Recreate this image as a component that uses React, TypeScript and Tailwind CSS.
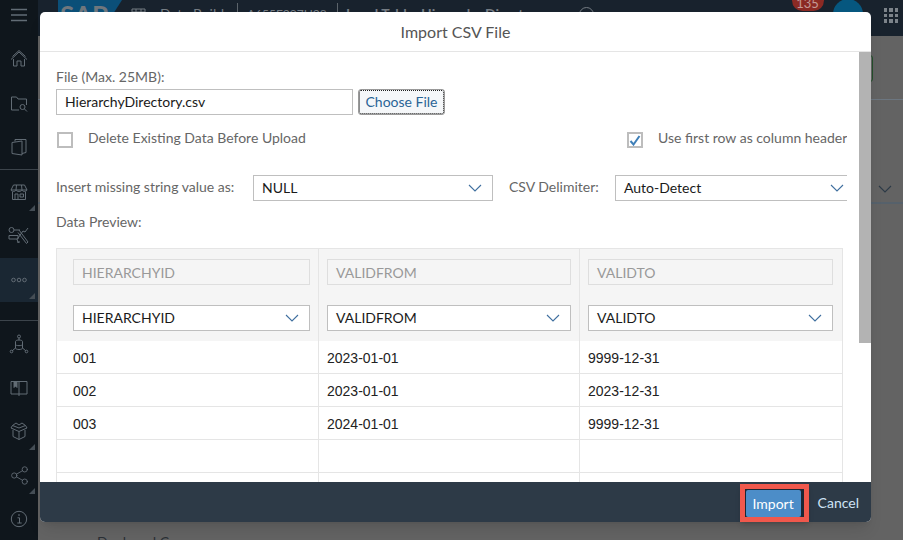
import { Share2 } from "lucide-react";

const rows = [
  ["001", "2023-01-01", "9999-12-31"],
  ["002", "2023-01-01", "2023-12-31"],
  ["003", "2024-01-01", "9999-12-31"],
  ["", "", ""],
  ["", "", ""],
];

const columns = [
  { name: "HIERARCHYID", width: "w-[261px]", pad: "pl-[16px] pr-[8px]" },
  { name: "VALIDFROM", width: "w-[261px]", pad: "pl-[8px] pr-[8px]" },
  { name: "VALIDTO", width: "w-[263px]", pad: "pl-[8px] pr-[9px]" },
];

function Chevron({ className }: { className: string }) {
  return (
    <svg width="14" height="8" viewBox="0 0 14 8" fill="none" stroke="currentColor" strokeWidth="1.1" className={className}>
      <path d="M1 1l6 6 6-6" />
    </svg>
  );
}

function Select({ value, className }: { value: string; className: string }) {
  return (
    <div className={`h-[26px] border border-[#bfbfbf] bg-white flex items-center justify-between pl-2 pr-[10px] text-[14px] text-[#1a1a1a] ${className}`}>
      <span className="-mt-px">{value}</span>
      <Chevron className="text-[#3f6f9f]" />
    </div>
  );
}

function Glyph({ children, w = 20, h = 20 }: { children: React.ReactNode; w?: number; h?: number }) {
  return (
    <svg width={w} height={h} viewBox={`0 0 ${w} ${h}`} fill="none" stroke="currentColor" strokeWidth="1" className="text-[#626c75]">
      {children}
    </svg>
  );
}

function RailItem({ children, active, arrow, className }: { children: React.ReactNode; active?: boolean; arrow?: boolean; className: string }) {
  return (
    <div className={`relative w-full flex items-center justify-center shrink-0 ${active ? "bg-[#1a2733]" : ""} ${className}`}>
      {children}
      {arrow && <div className="absolute right-[3px] bottom-[3px] w-0 h-0 border-l-[6px] border-l-transparent border-b-[6px] border-b-[#454e56]" />}
    </div>
  );
}

function Rail() {
  return (
    <aside className="w-[38px] h-full bg-[#0f161c] flex flex-col shrink-0 overflow-hidden">
      <RailItem className="h-[30px]">
        <Glyph w={16} h={14}>
          <path d="M0 1.5h16M0 7h16M0 12.5h16" strokeWidth="1.6" />
        </Glyph>
      </RailItem>
      <RailItem className="h-[58px]">
        <Glyph>
          <path d="M2 10.5L10 3l8 7.5M3.5 7.5L10 1.5l6.500 6M4.500 10v7H8v-5h4v5h3.500v-7" />
        </Glyph>
      </RailItem>
      <RailItem className="h-[30px]">
        <Glyph>
          <path d="M2.500 17V4h5l1.500 2h8.500v6M2.500 17H10" />
          <circle cx="13.500" cy="14" r="2.500" />
          <path d="M15.500 16l2.500 2.500" />
        </Glyph>
      </RailItem>
      <RailItem className="h-[51px] pt-[7px]">
        <Glyph>
          <path d="M3 5.500L13 4v14L3 16.500zM6 4.500V2.500h11v13l-4 1" />
        </Glyph>
      </RailItem>
      <div className="h-px bg-[#3c444b] shrink-0" />
      <RailItem arrow className="h-[44px]">
        <Glyph>
          <path d="M4.500 3h11L18 8H2zM2 8c1 2 4 2 5 0 1 2 5 2 6 0 1 2 4 2 5 0M7.500 3L7 8M12.500 3l.5 5M3.500 10v7.500h13V10" />
          <path d="M6 12h3v5.500H6zM11 12h3.500v3H11z" />
        </Glyph>
      </RailItem>
      <RailItem className="h-[44px]">
        <Glyph w={22} h={18}>
          <circle cx="3.500" cy="3" r="2.500" />
          <path d="M6 3h6M1 8.500h9v3.500H1zM11 3l9 12-1.500 1.500-8.500-11M20 1l-3 4-2-1-6 8.500 1.500 3.500" />
          <path d="M12 15h-3" />
        </Glyph>
      </RailItem>
      <RailItem active arrow className="h-[44px]">
        <Glyph w={16} h={6}>
          <circle cx="2.500" cy="3" r="1.800" />
          <circle cx="8" cy="3" r="1.800" />
          <circle cx="13.500" cy="3" r="1.800" />
        </Glyph>
      </RailItem>
      <div className="h-[18px] shrink-0" />
      <div className="h-px bg-[#3c444b] shrink-0" />
      <RailItem className="h-[46px]">
        <Glyph>
          <circle cx="10" cy="2.500" r="1.500" />
          <path d="M10 4v2M6.500 7.500c0-2 7-2 7 0v6.500c0 2-7 2-7 0zM6.500 10.500c0 1.500 7 1.500 7 0M6.500 14L3 17M13.500 14l3.500 3" />
          <circle cx="2.500" cy="17.500" r="1.300" />
          <circle cx="17.500" cy="17.500" r="1.300" />
        </Glyph>
      </RailItem>
      <RailItem className="h-[42px]">
        <Glyph w={18} h={18}>
          <path d="M1 2.500h16v12.500H1zM9 2.500V17" />
          <path d="M4 2.500v6l1.500-1.500L7 8.500v-6" fill="currentColor" />
        </Glyph>
      </RailItem>
      <RailItem arrow className="h-[44px]">
        <Glyph>
          <path d="M10 7L3.500 4.500 7 2l3 2 3-2 3.500 2.500zM10 10.500L2 7l1.500-2.500M10 10.500L18 7l-1.500-2.500M4 9v6.500l6 3 6-3V9M10 10.500v8" />
        </Glyph>
      </RailItem>
      <RailItem arrow className="h-[44px]">
        <Share2 className="w-[21px] h-[21px] text-[#626c75]" strokeWidth={1} />
      </RailItem>
      <RailItem className="h-[44px]">
        <Glyph w={18} h={18}>
          <circle cx="9" cy="9" r="7.700" />
          <path d="M7.500 7.800H9.500V13M7.300 13h4.400" />
          <path d="M8.300 5h1.400" strokeWidth="1.400" />
        </Glyph>
      </RailItem>
    </aside>
  );
}

function ShellHeader() {
  return (
    <header className="h-[36px] bg-[#18222d] shrink-0 flex items-start text-[14px] text-[#757c83] overflow-hidden">
      <div className="ml-[20px] w-[64px] h-[36px] bg-[#0b4f78] [clip-path:polygon(0_0,100%_0,64%_100%,0_100%)] pl-[2px] text-[26px] leading-[30px] font-bold text-[#70777d]">SAP</div>
      <svg width="15" height="14" viewBox="0 0 15 14" fill="none" stroke="currentColor" className="ml-[9px] mt-[8px]">
        <path d="M1 1h13v12H1zM1 4h13M5 1v12M10 1v12" />
      </svg>
      <span className="ml-[14px] mt-[4px] w-[77px] shrink-0 leading-[20px] whitespace-nowrap">Data Builder</span>
      <div className="mt-[3px] w-px h-[30px] bg-[#5c646b]" />
      <span className="ml-[9px] mt-[4px] w-[90px] shrink-0 text-[12px] leading-[20px] whitespace-nowrap">A655F097H08</span>
      <div className="mt-[3px] w-px h-[30px] bg-[#5c646b]" />
      <span className="ml-[8px] mt-[4px] w-[233px] shrink-0 leading-[20px] font-bold whitespace-nowrap">Local Table: Hierarchy Directory</span>
      <div className="mt-[7px] w-[15px] h-[15px] rounded-full border border-[#757c83] shrink-0" />
      <div className="ml-auto -mt-[10px] w-[32px] h-[21px] rounded-full bg-[#8b2a24] text-[#c49a95] text-[13px] leading-[26px] text-center shrink-0">135</div>
      <div className="ml-[9px] w-[30px] h-[34px] -mt-[1px] rounded-full bg-[#06577f] shrink-0" />
      <div className="ml-[21px] mr-[5px] mt-[8px] grid grid-cols-3 gap-[2px] shrink-0">
        {Array.from({ length: 9 }).map((_, i) => (
          <div key={i} className="w-[3.500px] h-[3.500px] bg-[#7c838a]" />
        ))}
      </div>
    </header>
  );
}

function BackgroundPage() {
  return (
    <div className="flex-1 min-h-0 flex flex-col bg-[#636363] text-[#2a2f35]">
      <div className="h-[64px] border-b border-[#6c7680] shrink-0 flex justify-end pr-[30px] pt-[19px]">
        <div className="w-[60px] h-[27px] rounded-[3px] border border-[#24502c]" />
      </div>
      <div className="h-[104px] border-b-2 border-[#56616b] shrink-0 flex justify-end items-end pr-[11px] pb-[9px]">
        <Chevron className="text-[#2c3a47]" />
      </div>
      <div className="pl-[59px] pt-[328px] text-[14px] leading-[20px] whitespace-nowrap">Deployed C</div>
    </div>
  );
}

export default function App() {
  return (
    <div className="w-[903px] h-[540px] overflow-hidden flex bg-[#616161] font-['Lato',sans-serif]">
      <Rail />

      <div className="flex-1 flex flex-col min-w-0 relative">
        <ShellHeader />
        <BackgroundPage />

        {/* Dialog */}
        <div className="absolute left-[2px] top-[12px] w-[831px] h-[510px] rounded-[5px] bg-white flex flex-col shadow-lg">
          <div className="h-[40px] shrink-0 border-b border-[#e5e5e5] flex items-center justify-center text-[16px] text-[#555]">Import CSV File</div>

          <div className="flex-1 min-h-0 flex overflow-hidden">
            <div className="w-[807px] shrink-0 pl-[16px] pt-[16px]">
              <div className="w-[791px] overflow-hidden">
                <div className="text-[14px] leading-[18px] text-[#666]">File (Max. 25MB):</div>
                <div className="flex items-center mt-[3px]">
                  <div className="w-[297px] h-[26px] border border-[#bfbfbf] flex items-center pl-2 pb-px text-[14px] text-[#1a1a1a]">HierarchyDirectory.csv</div>
                  <button className="ml-[5px] w-[87px] h-[26px] rounded-[3px] border border-[#999] outline-1 outline-dotted -outline-offset-2 outline-[#222] bg-[#f5f7f9] pb-px text-[14px] text-[#2a6496]">Choose File</button>
                </div>

                <div className="flex items-start mt-[17px] h-[16px]">
                  <div className="ml-px w-[16px] h-[16px] border-2 border-[#bdbdbd] shrink-0" />
                  <span className="ml-[15px] w-[539px] shrink-0 -mt-[2px] leading-[16px] text-[14px] text-[#666]">Delete Existing Data Before Upload</span>
                  <div className="w-[16px] h-[16px] border-2 border-[#bdbdbd] flex items-center justify-center shrink-0">
                    <svg width="12" height="11" viewBox="0 0 12 11" fill="none" stroke="#3f7fb8" strokeWidth="2">
                      <path d="M1.500 6l3 3.500 6-8.500" />
                    </svg>
                  </div>
                  <span className="ml-[15px] shrink-0 -mt-[2px] leading-[16px] whitespace-nowrap text-[14px] text-[#666]">Use first row as column header</span>
                </div>

                <div className="flex items-center mt-[27px] h-[26px]">
                  <span className="text-[14px] text-[#666] w-[197px] shrink-0 -mt-[4px]">Insert missing string value as:</span>
                  <Select value="NULL" className="w-[240px] shrink-0" />
                  <span className="ml-[16px] text-[14px] text-[#666] w-[106px] shrink-0 -mt-[4px]">CSV Delimiter:</span>
                  <Select value="Auto-Detect" className="w-[240px] shrink-0" />
                </div>

                <div className="mt-[12px] text-[14px] leading-[18px] text-[#666]">Data Preview:</div>

                {/* Preview table */}
                <div className="mt-[17px] w-[787px] border-l border-t border-r border-[#e5e5e5]">
                  <div className="flex bg-[#f5f5f5]">
                    {columns.map((c, i) => (
                      <div key={c.name} className={`${c.width} ${c.pad} h-[92px] pt-[10px] ${i > 0 ? "border-l border-[#e5e5e5]" : ""}`}>
                        <div className="h-[26px] border border-[#dedede] flex items-center pl-2 text-[14px] text-[#999]">{c.name}</div>
                        <Select value={c.name} className="mt-[20px]" />
                      </div>
                    ))}
                  </div>
                  {rows.map((r, ri) => (
                    <div key={ri} className={`flex ${ri > 0 ? "h-[33px] border-t border-[#e5e5e5]" : "h-[32px]"}`}>
                      {r.map((v, i) => (
                        <div key={i} className={`${columns[i].width} ${columns[i].pad} flex items-center pt-[3px] font-['Liberation_Sans',sans-serif] text-[14px] text-[#222] ${i > 0 ? "border-l border-[#e5e5e5]" : ""}`}>{v}</div>
                      ))}
                    </div>
                  ))}
                </div>
              </div>
            </div>
            {/* Scrollbar */}
            <div className="ml-auto w-[12px] shrink-0 bg-white">
              <div className="h-[291px] bg-[#b3b3b3]" />
            </div>
          </div>

          {/* Footer */}
          <div className="h-[40px] shrink-0 bg-[#2d3a47] rounded-b-[5px] flex items-center justify-end pr-[12px]">
            <div className="mt-[2px] mr-[9px] border-[5px] border-[#f0584c] bg-[#1c2733] shadow-md flex">
              <button className="h-[27px] w-[55px] mr-[3px] mt-[1px] ml-px bg-[#4c8dc8] rounded-[2px] pb-px text-[14px] text-white">Import</button>
            </div>
            <button className="text-[14px] text-[#cfe3f5]">Cancel</button>
          </div>
        </div>
      </div>
    </div>
  );
}
